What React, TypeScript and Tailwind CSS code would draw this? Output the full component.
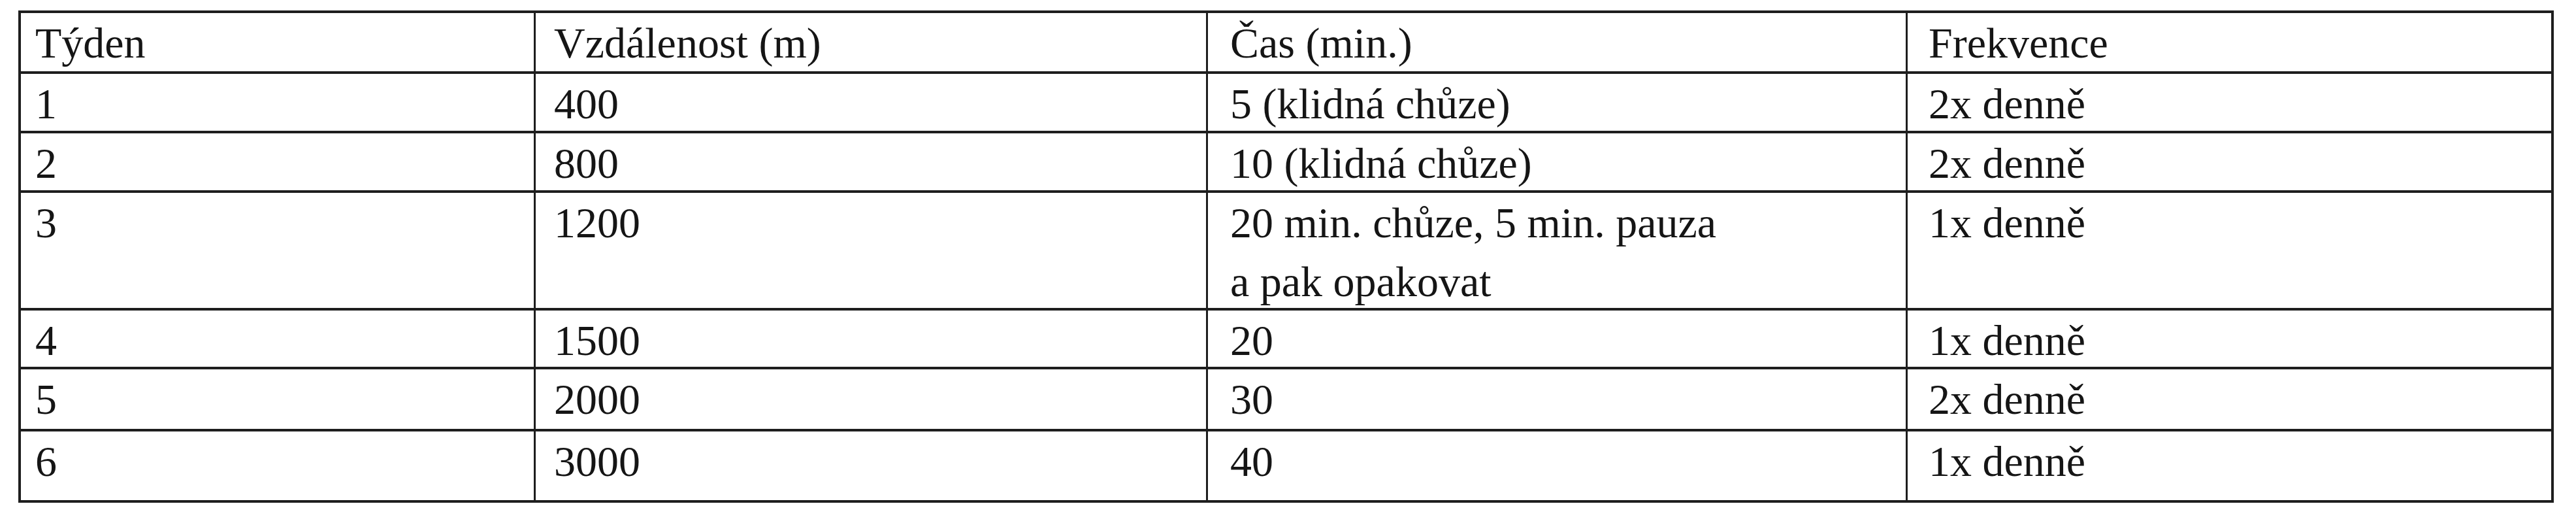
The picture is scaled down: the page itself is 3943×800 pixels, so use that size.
import React from "react";

const rows: string[][] = [
  ["Týden", "Vzdálenost (m)", "Čas (min.)", "Frekvence"],
  ["1", "400", "5 (klidná chůze)", "2x denně"],
  ["2", "800", "10 (klidná chůze)", "2x denně"],
  ["3", "1200", "20 min. chůze, 5 min. pauza\na pak opakovat", "1x denně"],
  ["4", "1500", "20", "1x denně"],
  ["5", "2000", "30", "2x denně"],
  ["6", "3000", "40", "1x denně"],
];

const padClasses = ["pl-[22px]", "pl-[28px]", "pl-[34px]", "pl-[32px]"];
const borderClasses = [
  "border-r-[3px]",
  "border-r-[3px]",
  "border-r-[3px]",
  "border-r-4",
];

export default function App() {
  return (
    <div className="w-[3943px] h-[800px] bg-white pt-[16px] pl-[28px]">
      <div
        className="grid w-fit grid-cols-[788px_1029px_1071px_989px] grid-rows-[93px_91px_91px_180px_90px_95px_109px] border-l-4 border-t-4 border-[#1e1e1e] text-[66px] leading-[90px] text-[#151515]"
        style={{ fontFamily: '"Liberation Serif", "Times New Roman", serif' }}
      >
        {rows.map((row, ri) =>
          row.map((cell, ci) => (
            <div
              key={`${ri}-${ci}`}
              className={`border-b-4 border-[#1e1e1e] pt-[1px] whitespace-pre-line ${borderClasses[ci]} ${padClasses[ci]}`}
            >
              {cell}
            </div>
          ))
        )}
      </div>
    </div>
  );
}
